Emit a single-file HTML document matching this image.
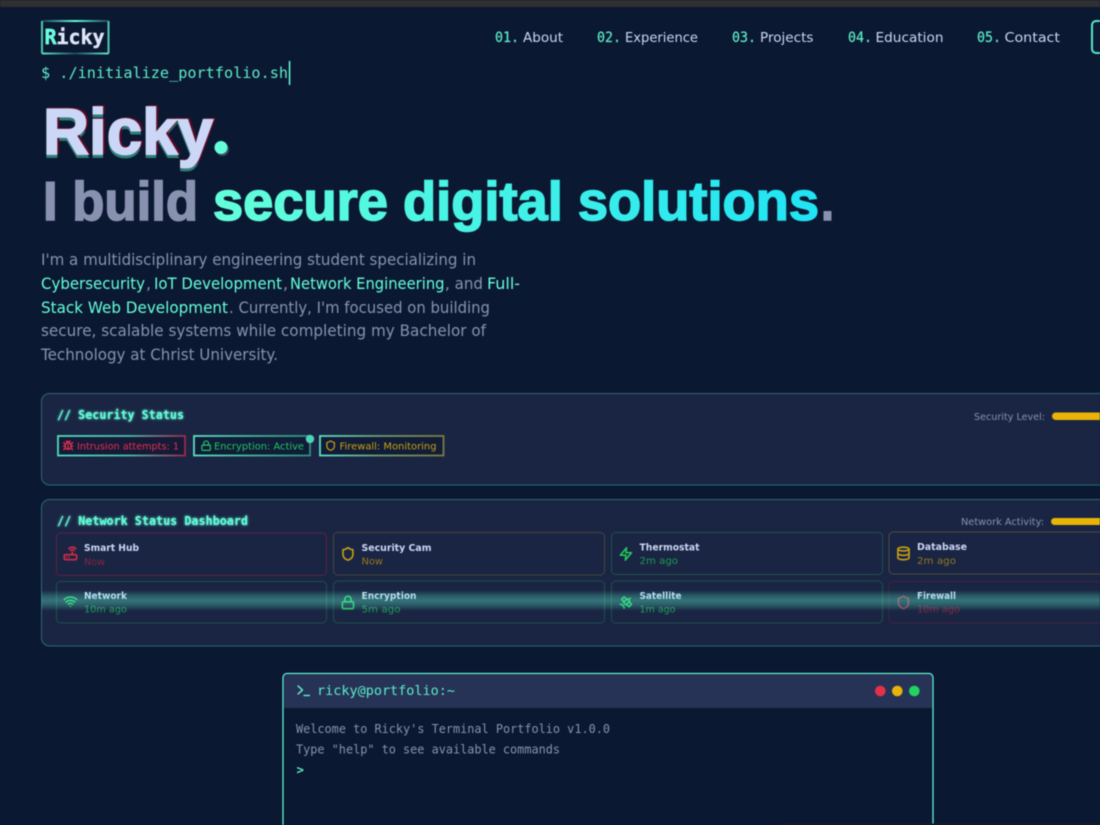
<!DOCTYPE html>
<html lang="en">
<head>
<meta charset="utf-8">
<title>Ricky</title>
<style>
html,body{margin:0;padding:0;width:1100px;height:825px;overflow:hidden;background:#0b1831}
svg{display:block;filter:blur(.45px)}
.h{font-family:"Liberation Sans",sans-serif;font-weight:700}
.s{font-family:"DejaVu Sans","Liberation Sans",sans-serif}
.m{font-family:"DejaVu Sans Mono","Liberation Mono",monospace}
.mb{font-family:"DejaVu Sans Mono","Liberation Mono",monospace;font-weight:700}
.b{font-family:"DejaVu Sans","Liberation Sans",sans-serif;font-weight:700}
.ic{fill:none;stroke-width:2.6;stroke-linecap:round;stroke-linejoin:round}
</style>
</head>
<body>
<svg xmlns="http://www.w3.org/2000/svg" width="1100" height="825" viewBox="0 0 1100 825">
<defs>
<linearGradient id="hg" gradientUnits="userSpaceOnUse" x1="213" y1="0" x2="833" y2="0"><stop offset="0" stop-color="#64ffda"/><stop offset="1" stop-color="#1ee3f5"/></linearGradient>
<linearGradient id="logoT" gradientUnits="userSpaceOnUse" x1="41" y1="0" x2="109" y2="0"><stop offset="0" stop-color="#64ffda" stop-opacity=".15"/><stop offset=".5" stop-color="#64ffda"/><stop offset="1" stop-color="#64ffda" stop-opacity=".2"/></linearGradient>
<linearGradient id="logoB" gradientUnits="userSpaceOnUse" x1="41" y1="0" x2="109" y2="0"><stop offset="0" stop-color="#64ffda" stop-opacity=".9"/><stop offset=".5" stop-color="#64ffda" stop-opacity=".2"/><stop offset="1" stop-color="#64ffda" stop-opacity=".9"/></linearGradient>
<linearGradient id="bR" x1="0" y1="0" x2="1" y2="0"><stop offset="0" stop-color="#50dcbc"/><stop offset=".55" stop-color="#4bbfa8"/><stop offset="1" stop-color="#9a2a4a"/></linearGradient>
<linearGradient id="bG" x1="0" y1="0" x2="1" y2="0"><stop offset="0" stop-color="#5be0c0"/><stop offset=".6" stop-color="#3fae8c"/><stop offset="1" stop-color="#2f8f78"/></linearGradient>
<linearGradient id="bY" x1="0" y1="0" x2="1" y2="0"><stop offset="0" stop-color="#5be0c0"/><stop offset=".5" stop-color="#6f9a6a"/><stop offset="1" stop-color="#7d7a40"/></linearGradient>
<linearGradient id="scan" x1="0" y1="0" x2="0" y2="1"><stop offset="0" stop-color="#64ffda" stop-opacity="0"/><stop offset=".3" stop-color="#64ffda" stop-opacity=".26"/><stop offset=".5" stop-color="#64ffda" stop-opacity=".36"/><stop offset=".7" stop-color="#64ffda" stop-opacity=".26"/><stop offset="1" stop-color="#64ffda" stop-opacity="0"/></linearGradient>
<filter id="gl" x="-10%" y="-60%" width="120%" height="220%"><feGaussianBlur stdDeviation="1.2" result="b"/><feMerge><feMergeNode in="b"/><feMergeNode in="SourceGraphic"/></feMerge></filter>
<clipPath id="np"><rect x="41.5" y="499" width="1060" height="147" rx="8"/></clipPath>
<g id="i-shield"><path d="M20 13c0 5-3.5 7.5-7.66 8.95a1 1 0 0 1-.67-.01C7.5 20.5 4 18 4 13V6a1 1 0 0 1 1-1c2 0 4.5-1.2 6.24-2.72a1.17 1.17 0 0 1 1.52 0C14.51 3.81 17 5 19 5a1 1 0 0 1 1 1z"/></g>
<g id="i-lock"><rect x="3" y="11" width="18" height="11" rx="2"/><path d="M7 11V7a5 5 0 0 1 10 0v4"/></g>
<g id="i-zap"><path d="M13 2 3 14h9l-1 8 10-12h-9l1-8z"/></g>
<g id="i-db"><ellipse cx="12" cy="5" rx="9" ry="3"/><path d="M3 5V19A9 3 0 0 0 21 19V5"/><path d="M3 12A9 3 0 0 0 21 12"/></g>
<g id="i-wifi"><path d="M5 13a10 10 0 0 1 14 0"/><path d="M8.5 16.5a5 5 0 0 1 7 0"/><path d="M2 8.82a15 15 0 0 1 20 0"/><path d="M12 20h.01"/></g>
<g id="i-router"><rect x="2" y="14" width="20" height="8" rx="2"/><path d="M6.01 18H6"/><path d="M10.01 18H10"/><path d="M15 10v4"/><path d="M17.84 7.17a4 4 0 0 0-5.66 0"/><path d="M20.66 4.34a8 8 0 0 0-11.31 0"/></g>
<g id="i-sat"><path d="M13 7 9 3 5 7l4 4"/><path d="m17 11 4 4-4 4-4-4"/><path d="m8 12 4 4 6-6-4-4Z"/><path d="m16 8 3-3"/><path d="M9 21a6 6 0 0 0-6-6"/></g>
<g id="i-bug"><path d="m8 2 1.88 1.88"/><path d="M14.12 3.88 16 2"/><path d="M9 7.13v-1a3 3 0 1 1 6 0v1"/><path d="M12 20c-3.3 0-6-2.7-6-6v-3a4 4 0 0 1 4-4h4a4 4 0 0 1 4 4v3c0 3.3-2.7 6-6 6"/><path d="M12 20v-9"/><path d="M6.53 9C4.6 8.8 3 7.1 3 5"/><path d="M6 13H2"/><path d="M3 21c0-2.1 1.7-3.9 3.8-4"/><path d="M20.97 5c0 2.1-1.6 3.8-3.5 4"/><path d="M22 13h-4"/><path d="M17.2 17c2.1.1 3.8 1.9 3.8 4"/></g>
</defs>

<rect width="1100" height="825" fill="#0b1831"/>
<rect x="-5" y="-5" width="1110" height="12" fill="#302f32"/>

<!-- logo -->
<path d="M42 21H108.500" stroke="url(#logoT)" stroke-width="2" fill="none"/>
<path d="M42 53.500H108.500" stroke="url(#logoB)" stroke-width="2" fill="none"/>
<path d="M42 21V53.500M108.500 21V53.500" stroke="#4fc8b0" stroke-width="2" fill="none"/>
<text class="mb" x="44.500" y="44" font-size="20" fill="#dfe6f8" stroke="#dfe6f8" stroke-width=".4" textLength="60" lengthAdjust="spacingAndGlyphs">Ricky</text>
<text class="mb" x="44.500" y="44" font-size="20" fill="#64ffda" stroke="#64ffda" stroke-width=".4">R</text>

<!-- nav -->
<g font-size="13.500">
<text class="s" x="523" y="42" fill="#ccd6f6" textLength="40" lengthAdjust="spacingAndGlyphs">About</text>
<text class="s" x="625" y="42" fill="#ccd6f6" textLength="73" lengthAdjust="spacingAndGlyphs">Experience</text>
<text class="s" x="760" y="42" fill="#ccd6f6" textLength="53.500" lengthAdjust="spacingAndGlyphs">Projects</text>
<text class="s" x="875.500" y="42" fill="#ccd6f6" textLength="68" lengthAdjust="spacingAndGlyphs">Education</text>
<text class="s" x="1004.500" y="42" fill="#ccd6f6" textLength="55.500" lengthAdjust="spacingAndGlyphs">Contact</text>
</g>
<g font-size="14" fill="#5cecc8" stroke="#5cecc8" stroke-width=".2">
<text class="m" x="495" y="42" textLength="24" lengthAdjust="spacingAndGlyphs">01.</text>
<text class="m" x="597" y="42" textLength="24" lengthAdjust="spacingAndGlyphs">02.</text>
<text class="m" x="732" y="42" textLength="24" lengthAdjust="spacingAndGlyphs">03.</text>
<text class="m" x="848" y="42" textLength="24" lengthAdjust="spacingAndGlyphs">04.</text>
<text class="m" x="977" y="42" textLength="24" lengthAdjust="spacingAndGlyphs">05.</text>
</g>
<rect x="1092" y="21" width="40" height="32" rx="4" fill="#0c1a36" stroke="#55e6c6" stroke-width="2"/>

<!-- prompt -->
<text class="m" x="41" y="78" font-size="15.200" fill="#5cecc8" textLength="247" lengthAdjust="spacingAndGlyphs">$ ./initialize_portfolio.sh</text>
<rect x="288.800" y="61" width="1.500" height="24" fill="#64ffda"/>

<!-- hero -->
<text class="h" font-size="65" x="43" y="157" fill="#2f7f78" stroke="#2f7f78" stroke-width="1.800" textLength="170" lengthAdjust="spacingAndGlyphs">Ricky</text>
<text class="h" font-size="65" x="45" y="153" fill="#5c0a26" stroke="#5c0a26" stroke-width="1.800" textLength="170" lengthAdjust="spacingAndGlyphs">Ricky</text>
<text class="h" font-size="65" x="43" y="154" fill="#ccd6f6" stroke="#ccd6f6" stroke-width="1.800" textLength="170" lengthAdjust="spacingAndGlyphs">Ricky</text>
<circle cx="222.500" cy="149.500" r="6.500" fill="#3a4a5c"/>
<circle cx="221" cy="147.500" r="6.500" fill="#64ffda"/>
<g font-size="55">
<text class="h" x="43" y="220" fill="#8892b0" stroke="#8892b0" stroke-width="1.600" textLength="155" lengthAdjust="spacingAndGlyphs">I build</text>
<text class="h" x="213" y="220" fill="url(#hg)" stroke="url(#hg)" stroke-width="1.600" textLength="606" lengthAdjust="spacingAndGlyphs">secure digital solutions</text>
<text class="h" x="821" y="220" fill="#8892b0" stroke="#8892b0" stroke-width="1.600" textLength="13" lengthAdjust="spacingAndGlyphs">.</text>
</g>

<!-- paragraph -->
<g font-size="16">
<text class="s" x="41" y="265" fill="#8892b0" textLength="435" lengthAdjust="spacingAndGlyphs">I'm a multidisciplinary engineering student specializing in</text>
<text class="s" x="41" y="289" fill="#64ffda" textLength="104" lengthAdjust="spacingAndGlyphs">Cybersecurity</text>
<text class="s" x="146" y="289" fill="#8892b0">,</text>
<text class="s" x="154" y="289" fill="#64ffda" textLength="128" lengthAdjust="spacingAndGlyphs">IoT Development</text>
<text class="s" x="283" y="289" fill="#8892b0">,</text>
<text class="s" x="290" y="289" fill="#64ffda" textLength="154.500" lengthAdjust="spacingAndGlyphs">Network Engineering</text>
<text class="s" x="445" y="289" fill="#8892b0" textLength="38" lengthAdjust="spacingAndGlyphs">, and</text>
<text class="s" x="487" y="289" fill="#64ffda" textLength="33" lengthAdjust="spacingAndGlyphs">Full-</text>
<text class="s" x="41" y="313" fill="#64ffda" textLength="187" lengthAdjust="spacingAndGlyphs">Stack Web Development</text>
<text class="s" x="229" y="313" fill="#8892b0" textLength="261" lengthAdjust="spacingAndGlyphs">. Currently, I'm focused on building</text>
<text class="s" x="41" y="336" fill="#8892b0" textLength="445" lengthAdjust="spacingAndGlyphs">secure, scalable systems while completing my Bachelor of</text>
<text class="s" x="41" y="360" fill="#8892b0" textLength="237" lengthAdjust="spacingAndGlyphs">Technology at Christ University.</text>
</g>

<!-- security panel -->
<rect x="41.500" y="393.500" width="1070" height="91.500" rx="8" fill="#192543" stroke="#2c6a70" stroke-width="1"/>
<text class="mb" x="57" y="419" font-size="12" fill="#64ffda" filter="url(#gl)" textLength="127" lengthAdjust="spacingAndGlyphs">// Security Status</text>

<rect x="58" y="436" width="127" height="19.500" fill="#141a38" stroke="url(#bR)" stroke-width="1.800"/>
<use href="#i-bug" class="ic" stroke="#e6304a" transform="translate(62.500,440) scale(.47)"/>
<text class="s" x="77" y="449.500" font-size="10" fill="#e6304a" textLength="102" lengthAdjust="spacingAndGlyphs">Intrusion attempts: 1</text>

<rect x="194" y="436" width="116" height="19.500" fill="#101c38" stroke="url(#bG)" stroke-width="1.800"/>
<use href="#i-lock" class="ic" stroke="#22c55e" transform="translate(200.500,440) scale(.47)"/>
<text class="s" x="214" y="449.500" font-size="10" fill="#22c55e" textLength="90" lengthAdjust="spacingAndGlyphs">Encryption: Active</text>
<circle cx="310" cy="439" r="4.200" fill="#4fd3b4"/>

<rect x="320" y="436" width="123.500" height="19.500" fill="#101c38" stroke="url(#bY)" stroke-width="1.800"/>
<use href="#i-shield" class="ic" stroke="#c9a012" transform="translate(325,440) scale(.47)"/>
<text class="s" x="339.500" y="449.500" font-size="10" fill="#c9a012" textLength="97" lengthAdjust="spacingAndGlyphs">Firewall: Monitoring</text>

<text class="s" x="974" y="420" font-size="10" fill="#8892b0" textLength="71" lengthAdjust="spacingAndGlyphs">Security Level:</text>
<rect x="1052" y="412.500" width="70" height="7.500" rx="3.700" fill="#eab308"/>

<!-- network panel -->
<rect x="41.500" y="499.500" width="1070" height="146.500" rx="8" fill="#192543" stroke="#2c6a70" stroke-width="1"/>
<text class="mb" x="57" y="525" font-size="12" fill="#64ffda" filter="url(#gl)" textLength="191" lengthAdjust="spacingAndGlyphs">// Network Status Dashboard</text>
<text class="s" x="961" y="525" font-size="10" fill="#8892b0" textLength="83" lengthAdjust="spacingAndGlyphs">Network Activity:</text>
<rect x="1051" y="518" width="70" height="7" rx="3.500" fill="#eab308"/>

<!-- cards -->
<g fill="none" stroke-width="1">
<rect x="56.500" y="533" width="270" height="42.500" rx="4" stroke="#5c2340"/>
<rect x="333.500" y="532.500" width="271" height="42.500" rx="4" stroke="#48463a"/>
<rect x="611.500" y="532.500" width="271" height="42" rx="4" stroke="#22504c"/>
<rect x="889" y="532" width="260" height="42" rx="4" stroke="#4f4a38"/>
<rect x="56.500" y="581.500" width="270" height="41.500" rx="4" stroke="#1f5048"/>
<rect x="333.500" y="581" width="271" height="42" rx="4" stroke="#1f5048"/>
<rect x="611.500" y="581" width="271" height="42" rx="4" stroke="#1f5048"/>
<rect x="889" y="581.500" width="260" height="41.500" rx="4" stroke="#42223e"/>
</g>
<use href="#i-router" class="ic" stroke="#d42c48" transform="translate(63,546) scale(.62)"/>
<use href="#i-shield" class="ic" stroke="#c9a012" transform="translate(340.500,546.500) scale(.62)"/>
<use href="#i-zap" class="ic" stroke="#22c55e" transform="translate(618.500,546.500) scale(.62)"/>
<use href="#i-db" class="ic" stroke="#c9a012" transform="translate(896,546) scale(.62)"/>
<use href="#i-wifi" class="ic" stroke="#22c55e" transform="translate(63,594) scale(.62)"/>
<use href="#i-lock" class="ic" stroke="#22c55e" transform="translate(340.500,595) scale(.62)"/>
<use href="#i-sat" class="ic" stroke="#22c55e" transform="translate(618.500,595) scale(.62)"/>
<use href="#i-shield" class="ic" stroke="#c83a50" opacity=".75" transform="translate(896,595) scale(.62)"/>

<g font-size="10" fill="#ccd6f6">
<text class="b" x="84" y="551" textLength="55" lengthAdjust="spacingAndGlyphs">Smart Hub</text>
<text class="b" x="361.500" y="551" textLength="70" lengthAdjust="spacingAndGlyphs">Security Cam</text>
<text class="b" x="639.500" y="550.500" textLength="60" lengthAdjust="spacingAndGlyphs">Thermostat</text>
<text class="b" x="917" y="550" textLength="50" lengthAdjust="spacingAndGlyphs">Database</text>
<text class="b" x="84" y="599" textLength="43" lengthAdjust="spacingAndGlyphs">Network</text>
<text class="b" x="361.500" y="599" textLength="55" lengthAdjust="spacingAndGlyphs">Encryption</text>
<text class="b" x="639.500" y="599" textLength="42" lengthAdjust="spacingAndGlyphs">Satellite</text>
<text class="b" x="917" y="599" textLength="39" lengthAdjust="spacingAndGlyphs">Firewall</text>
</g>
<g font-size="10">
<text class="s" x="84" y="565" fill="#8a2340" textLength="21" lengthAdjust="spacingAndGlyphs">Now</text>
<text class="s" x="361.500" y="564.500" fill="#96771c" textLength="21.500" lengthAdjust="spacingAndGlyphs">Now</text>
<text class="s" x="639.500" y="564" fill="#1f9a52" textLength="38.500" lengthAdjust="spacingAndGlyphs">2m ago</text>
<text class="s" x="917" y="564" fill="#96771c" textLength="39" lengthAdjust="spacingAndGlyphs">2m ago</text>
<text class="s" x="84" y="612.500" fill="#1f9a52" textLength="43" lengthAdjust="spacingAndGlyphs">10m ago</text>
<text class="s" x="361.500" y="612.500" fill="#1f9a52" textLength="39" lengthAdjust="spacingAndGlyphs">5m ago</text>
<text class="s" x="639.500" y="612.500" fill="#1f9a52" textLength="36" lengthAdjust="spacingAndGlyphs">1m ago</text>
<text class="s" x="917" y="612.500" fill="#8a2340" textLength="43" lengthAdjust="spacingAndGlyphs">10m ago</text>
</g>
<g clip-path="url(#np)"><rect x="41" y="590" width="1060" height="21" fill="url(#scan)"/></g>

<!-- terminal -->
<rect x="283" y="673.500" width="650" height="170" rx="4" fill="#0b1831" stroke="#64ffda" stroke-width="1.200"/>
<path d="M284 708V678a4 4 0 0 1 4-4H928a4 4 0 0 1 4 4V708Z" fill="#263356"/>
<path d="M298 686l4.500 4-4.500 4M304 695.500h5.500" fill="none" stroke="#64ffda" stroke-width="1.300" stroke-linecap="round" stroke-linejoin="round"/>
<text class="m" x="317" y="695" font-size="13.500" fill="#5cecc8" textLength="138" lengthAdjust="spacingAndGlyphs">ricky@portfolio:~</text>
<circle cx="880.300" cy="691" r="5.300" fill="#e6304a"/>
<circle cx="897.300" cy="691" r="5.300" fill="#eab308"/>
<circle cx="914.300" cy="691" r="5.300" fill="#22d45f"/>
<text class="m" x="296" y="733" font-size="12.400" fill="#8892b0" textLength="314" lengthAdjust="spacingAndGlyphs">Welcome to Ricky's Terminal Portfolio v1.0.0</text>
<text class="m" x="296" y="753.500" font-size="12.400" fill="#8892b0" textLength="264" lengthAdjust="spacingAndGlyphs">Type "help" to see available commands</text>
<text class="mb" x="296.500" y="774" font-size="12.400" fill="#5cecc8">&gt;</text>
<rect x="780" y="823.500" width="320" height="1.500" fill="#1b1a2c"/>
</svg>
</body>
</html>
